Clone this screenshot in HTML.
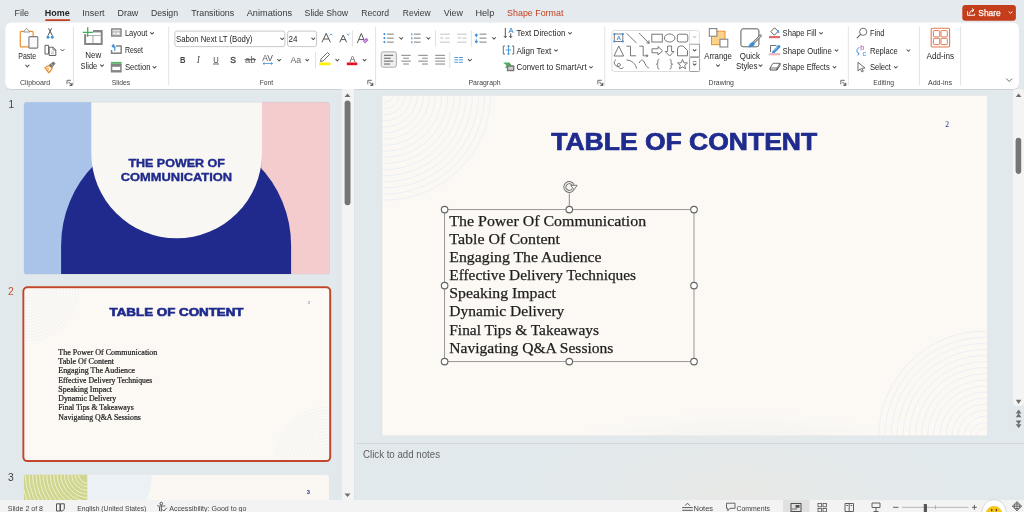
<!DOCTYPE html><html><head><meta charset="utf-8"><title>PowerPoint</title><style>html,body{margin:0;padding:0;width:1024px;height:512px;overflow:hidden;background:#e2e9ec;font-family:"Liberation Sans",sans-serif}</style></head><body><svg width="1024" height="512" viewBox="0 0 1024 512" style="display:block;will-change:transform">
<defs><filter id="sh" x="-5%" y="-20%" width="110%" height="150%"><feDropShadow dx="0" dy="0.6" stdDeviation="0.7" flood-color="#000" flood-opacity="0.16"/></filter><clipPath id="thumb3"><rect x="23.5" y="474.3" width="306" height="25.7"/></clipPath><radialGradient id="warm" cx="0.5" cy="0.5" r="0.5"><stop offset="0" stop-color="#e9e9e5" stop-opacity="0.85"/><stop offset="0.45" stop-color="#e8e9e7" stop-opacity="0.45"/><stop offset="1" stop-color="#e2e9ec" stop-opacity="0"/></radialGradient><clipPath id="slideclip"><rect x="0" y="0" width="605" height="340"/></clipPath></defs>
<rect x="0" y="0" width="1024" height="512" fill="#e2e9ec"/>
<rect x="0" y="0" width="1024" height="30" fill="#e4eaee"/>
<text x="14.60" y="16.20" font-family="Liberation Sans" font-size="9.2" font-weight="400" fill="#383838" textLength="14.4" lengthAdjust="spacingAndGlyphs" >File</text>
<text x="44.80" y="16.20" font-family="Liberation Sans" font-size="9.2" font-weight="700" fill="#242424" textLength="24.9" lengthAdjust="spacingAndGlyphs" >Home</text>
<text x="82.30" y="16.20" font-family="Liberation Sans" font-size="9.2" font-weight="400" fill="#383838" textLength="22.3" lengthAdjust="spacingAndGlyphs" >Insert</text>
<text x="117.50" y="16.20" font-family="Liberation Sans" font-size="9.2" font-weight="400" fill="#383838" textLength="20.8" lengthAdjust="spacingAndGlyphs" >Draw</text>
<text x="150.90" y="16.20" font-family="Liberation Sans" font-size="9.2" font-weight="400" fill="#383838" textLength="27.2" lengthAdjust="spacingAndGlyphs" >Design</text>
<text x="191.20" y="16.20" font-family="Liberation Sans" font-size="9.2" font-weight="400" fill="#383838" textLength="43.0" lengthAdjust="spacingAndGlyphs" >Transitions</text>
<text x="246.70" y="16.20" font-family="Liberation Sans" font-size="9.2" font-weight="400" fill="#383838" textLength="45.5" lengthAdjust="spacingAndGlyphs" >Animations</text>
<text x="304.60" y="16.20" font-family="Liberation Sans" font-size="9.2" font-weight="400" fill="#383838" textLength="43.4" lengthAdjust="spacingAndGlyphs" >Slide Show</text>
<text x="361.20" y="16.20" font-family="Liberation Sans" font-size="9.2" font-weight="400" fill="#383838" textLength="27.8" lengthAdjust="spacingAndGlyphs" >Record</text>
<text x="402.80" y="16.20" font-family="Liberation Sans" font-size="9.2" font-weight="400" fill="#383838" textLength="27.8" lengthAdjust="spacingAndGlyphs" >Review</text>
<text x="443.80" y="16.20" font-family="Liberation Sans" font-size="9.2" font-weight="400" fill="#383838" textLength="19.1" lengthAdjust="spacingAndGlyphs" >View</text>
<text x="475.50" y="16.20" font-family="Liberation Sans" font-size="9.2" font-weight="400" fill="#383838" textLength="18.7" lengthAdjust="spacingAndGlyphs" >Help</text>
<text x="507.10" y="16.20" font-family="Liberation Sans" font-size="9.2" font-weight="400" fill="#c43e1c" textLength="56.3" lengthAdjust="spacingAndGlyphs" >Shape Format</text>
<rect x="45" y="19.3" width="25.3" height="1.6" rx="0.8" fill="#c43e1c"/>
<rect x="962.3" y="4.9" width="53.6" height="15.8" rx="3" fill="#c43e1c"/>
<path d="M967.6 11.2 V15.3 H974.6 V13.6" fill="none" stroke="#fff" stroke-width="0.95" stroke-linejoin="round"/>
<path d="M969.6 13.8 C969.8 11.4 971.2 10.2 973.6 10.2 M972.2 8.6 L974 10.2 L972.2 11.8" fill="none" stroke="#fff" stroke-width="0.95" stroke-linecap="round" stroke-linejoin="round"/>
<text x="978.30" y="15.70" font-family="Liberation Sans" font-size="9.4" font-weight="400" fill="#ffffff" textLength="22.4" lengthAdjust="spacingAndGlyphs" stroke="#fff" stroke-width="0.25">Share</text>
<path d="M1009.00 11.80 L1010.60 13.40 L1012.20 11.80" fill="none" stroke="#ffffff" stroke-width="1" stroke-linecap="round" stroke-linejoin="round"/>
<rect x="5.3" y="22.5" width="1013.7" height="66.5" rx="6" fill="#ffffff" filter="url(#sh)"/>
<rect x="72.90" y="26.5" width="1" height="59.0" fill="#e3e3e3"/>
<rect x="168.20" y="26.5" width="1" height="59.0" fill="#e3e3e3"/>
<rect x="375.10" y="26.5" width="1" height="59.0" fill="#e3e3e3"/>
<rect x="604.30" y="26.5" width="1" height="59.0" fill="#e3e3e3"/>
<rect x="847.80" y="26.5" width="1" height="59.0" fill="#e3e3e3"/>
<rect x="918.90" y="26.5" width="1" height="59.0" fill="#e3e3e3"/>
<rect x="960.10" y="26.5" width="1" height="59.0" fill="#e3e3e3"/>
<text x="19.90" y="84.50" font-family="Liberation Sans" font-size="7.6" font-weight="400" fill="#424242" textLength="30.3" lengthAdjust="spacingAndGlyphs" >Clipboard</text>
<text x="111.80" y="84.50" font-family="Liberation Sans" font-size="7.6" font-weight="400" fill="#424242" textLength="18.4" lengthAdjust="spacingAndGlyphs" >Slides</text>
<text x="259.70" y="84.50" font-family="Liberation Sans" font-size="7.6" font-weight="400" fill="#424242" textLength="13.3" lengthAdjust="spacingAndGlyphs" >Font</text>
<text x="468.50" y="84.50" font-family="Liberation Sans" font-size="7.6" font-weight="400" fill="#424242" textLength="32.1" lengthAdjust="spacingAndGlyphs" >Paragraph</text>
<text x="708.60" y="84.50" font-family="Liberation Sans" font-size="7.6" font-weight="400" fill="#424242" textLength="25.3" lengthAdjust="spacingAndGlyphs" >Drawing</text>
<text x="873.20" y="84.50" font-family="Liberation Sans" font-size="7.6" font-weight="400" fill="#424242" textLength="20.8" lengthAdjust="spacingAndGlyphs" >Editing</text>
<text x="927.90" y="84.50" font-family="Liberation Sans" font-size="7.6" font-weight="400" fill="#424242" textLength="24.2" lengthAdjust="spacingAndGlyphs" >Add-ins</text>
<path d="M67.0 84.3 V80.3 H71.0" fill="none" stroke="#616161" stroke-width="0.9"/>
<path d="M68.5 81.8 L72.0 85.3 M72.0 82.8 V85.3 H69.5" fill="none" stroke="#424242" stroke-width="1"/>
<path d="M367.8 84.3 V80.3 H371.8" fill="none" stroke="#616161" stroke-width="0.9"/>
<path d="M369.3 81.8 L372.8 85.3 M372.8 82.8 V85.3 H370.3" fill="none" stroke="#424242" stroke-width="1"/>
<path d="M597.8 84.3 V80.3 H601.8" fill="none" stroke="#616161" stroke-width="0.9"/>
<path d="M599.3 81.8 L602.8 85.3 M602.8 82.8 V85.3 H600.3" fill="none" stroke="#424242" stroke-width="1"/>
<path d="M840.8 84.3 V80.3 H844.8" fill="none" stroke="#616161" stroke-width="0.9"/>
<path d="M842.3 81.8 L845.8 85.3 M845.8 82.8 V85.3 H843.3" fill="none" stroke="#424242" stroke-width="1"/>
<rect x="20.3" y="31.3" width="12.8" height="15.6" rx="1" fill="#fff" stroke="#e8912d" stroke-width="1.2"/>
<path d="M23.5 32 L26.7 28.3 L29.9 32 Z" fill="#fff" stroke="#8a8a8a" stroke-width="0.9" stroke-linejoin="round"/>
<rect x="28.9" y="36.6" width="8.9" height="11.5" rx="1" fill="#fafafa" stroke="#7a7a7a" stroke-width="1.1"/>
<text x="18.30" y="58.95" font-family="Liberation Sans" font-size="8.7" font-weight="400" fill="#262626" textLength="17.9" lengthAdjust="spacingAndGlyphs" >Paste</text>
<path d="M25.60 65.15 L27.30 66.85 L29.00 65.15" fill="none" stroke="#555555" stroke-width="1.05" stroke-linecap="round" stroke-linejoin="round"/>
<path d="M48.6 28.3 L52.3 35.6 M51.6 28.3 L47.9 35.6" stroke="#555" stroke-width="1" fill="none"/>
<circle cx="48" cy="37.2" r="1.45" fill="#3b8fd9"/><circle cx="52.3" cy="37.2" r="1.45" fill="#3b8fd9"/>
<path d="M45 45.3 H48.6 M45 45.3 V54 H48.6" fill="none" stroke="#616161" stroke-width="1"/>
<path d="M48.6 45.3 V54" stroke="#616161" stroke-width="1"/>
<path d="M49.2 47.2 H53 L55.8 50 V55.5 H49.2 Z" fill="#fff" stroke="#616161" stroke-width="1" stroke-linejoin="round"/>
<path d="M53 47.2 V50 H55.8" fill="none" stroke="#616161" stroke-width="0.8"/>
<path d="M51 52 H54 M51 53.7 H54" stroke="#a0a0a0" stroke-width="0.7"/>
<path d="M60.80 49.35 L62.50 51.05 L64.20 49.35" fill="none" stroke="#555" stroke-width="1" stroke-linecap="round" stroke-linejoin="round"/>
<path d="M45 67.5 L49.3 65.3 L52.2 68.5 L48.8 72.8 Z" fill="#fff" stroke="#e8912d" stroke-width="1.3" stroke-linejoin="round"/>
<path d="M46.5 68 L49.5 67.5 L48.5 70.8" fill="#f5b86a"/>
<path d="M48.8 65 L53.5 61.5 L55.5 63.5 L52 68 Z" fill="#777"/>
<path d="M51 63.8 L53.8 66.5" stroke="#fff" stroke-width="0.5"/>
<rect x="84.1" y="30.1" width="18.6" height="14.9" rx="0.6" fill="#858585"/>
<rect x="86.1" y="32.4" width="14.6" height="10.6" fill="#fff"/>
<rect x="86.1" y="35.1" width="14.6" height="0.9" fill="#a8a8a8"/>
<rect x="92.4" y="35.5" width="1.1" height="7.5" fill="#a8a8a8"/>
<rect x="81.5" y="27" width="11.5" height="7.2" fill="#fff"/>
<path d="M82.7 32.3 H92.9 M87.7 27.2 V36.7" stroke="#3fae5a" stroke-width="1.3"/>
<text x="85.30" y="58.35" font-family="Liberation Sans" font-size="8.7" font-weight="400" fill="#262626" textLength="15.9" lengthAdjust="spacingAndGlyphs" >New</text>
<text x="80.60" y="69.15" font-family="Liberation Sans" font-size="8.7" font-weight="400" fill="#262626" textLength="16.6" lengthAdjust="spacingAndGlyphs" >Slide</text>
<path d="M100.50 64.85 L102.00 66.35 L103.50 64.85" fill="none" stroke="#555555" stroke-width="1.05" stroke-linecap="round" stroke-linejoin="round"/>
<rect x="111" y="28.2" width="10.7" height="8.5" rx="0.5" fill="#858585"/>
<rect x="112.5" y="29.7" width="7.7" height="5.5" fill="#f4f4f4"/>
<rect x="112.5" y="30.8" width="7.7" height="0.8" fill="#a8a8a8"/>
<rect x="113" y="32.2" width="2.8" height="2.5" fill="#fff" stroke="#a8a8a8" stroke-width="0.5"/>
<rect x="116.8" y="32.2" width="2.8" height="2.5" fill="#fff" stroke="#a8a8a8" stroke-width="0.5"/>
<text x="124.90" y="36.45" font-family="Liberation Sans" font-size="8.7" font-weight="400" fill="#262626" textLength="22.5" lengthAdjust="spacingAndGlyphs" >Layout</text>
<path d="M150.50 32.55 L152.00 34.05 L153.50 32.55" fill="none" stroke="#555555" stroke-width="1.05" stroke-linecap="round" stroke-linejoin="round"/>
<rect x="110.8" y="45.2" width="11.1" height="8.7" rx="0.5" fill="#858585"/>
<rect x="112.3" y="46.7" width="8.1" height="5.7" fill="#fff"/>
<rect x="110.3" y="44" width="5.5" height="6" fill="#fff"/>
<path d="M114.8 50.3 V47.3 C114.8 46.2 113.8 45.6 112.6 45.9 M113.6 44.7 L112.2 46 L113.6 47.2" fill="none" stroke="#3b8fd9" stroke-width="1.2" stroke-linecap="round" stroke-linejoin="round"/>
<text x="124.90" y="53.25" font-family="Liberation Sans" font-size="8.7" font-weight="400" fill="#262626" textLength="18.1" lengthAdjust="spacingAndGlyphs" >Reset</text>
<rect x="110.8" y="63.8" width="10.9" height="8.8" rx="0.5" fill="#858585"/>
<rect x="112.3" y="66.8" width="7.9" height="3.3" fill="#fff"/>
<rect x="110.8" y="61.9" width="10.9" height="1.9" fill="#5cb36c"/>
<text x="124.90" y="70.45" font-family="Liberation Sans" font-size="8.7" font-weight="400" fill="#262626" textLength="25.5" lengthAdjust="spacingAndGlyphs" >Section</text>
<path d="M153.00 66.55 L154.50 68.05 L156.00 66.55" fill="none" stroke="#555555" stroke-width="1.05" stroke-linecap="round" stroke-linejoin="round"/>
<rect x="174.9" y="31.1" width="110" height="15.5" rx="2.2" fill="#fff" stroke="#c2c2c2" stroke-width="0.9"/>
<text x="176.00" y="42.15" font-family="Liberation Sans" font-size="8.7" font-weight="400" fill="#262626" textLength="76.4" lengthAdjust="spacingAndGlyphs" >Sabon Next LT (Body)</text>
<path d="M280.70 38.05 L282.20 39.55 L283.70 38.05" fill="none" stroke="#555555" stroke-width="1.05" stroke-linecap="round" stroke-linejoin="round"/>
<rect x="287.6" y="31.1" width="29" height="15.5" rx="2.2" fill="#fff" stroke="#c2c2c2" stroke-width="0.9"/>
<text x="288.60" y="42.15" font-family="Liberation Sans" font-size="8.7" font-weight="400" fill="#262626" textLength="9.0" lengthAdjust="spacingAndGlyphs" >24</text>
<path d="M311.80 38.05 L313.30 39.55 L314.80 38.05" fill="none" stroke="#555555" stroke-width="1.05" stroke-linecap="round" stroke-linejoin="round"/>
<path d="M322 42.3 L326.2 33.3 L330.4 42.3 M323.6 39 H328.8" fill="none" stroke="#555" stroke-width="1"/>
<path d="M329.6 35.3 L331 33.9 L332.4 35.3" fill="none" stroke="#3b8fd9" stroke-width="0.9"/>
<path d="M339.8 42.3 L343.2 35 L346.6 42.3 M341.1 39.6 H345.3" fill="none" stroke="#555" stroke-width="1"/>
<path d="M346.8 33.8 L348.2 35.2 L349.6 33.8" fill="none" stroke="#3b8fd9" stroke-width="0.9"/>
<rect x="351.90" y="30.5" width="1" height="16.0" fill="#e0e0e0"/>
<path d="M357.3 43 L361.3 33.5 L365.3 43 M358.8 39.6 H363.8" fill="none" stroke="#555" stroke-width="1"/>
<path d="M362.8 41.3 L366.3 37.8 L368.6 40.1 L365.1 43.6 Z" fill="#b869d4"/>
<path d="M364 42.4 L366.3 40" stroke="#fff" stroke-width="0.6"/>
<text x="180.00" y="62.50" font-family="Liberation Sans" font-size="8.8" font-weight="700" fill="#424242" textLength="5.5" lengthAdjust="spacingAndGlyphs" >B</text>
<text x="196.80" y="62.60" font-family="Liberation Serif" font-size="9.5" font-weight="400" fill="#555" font-style="italic">I</text>
<text x="213.30" y="62.50" font-family="Liberation Sans" font-size="8.8" font-weight="400" fill="#424242" textLength="5.5" lengthAdjust="spacingAndGlyphs" >U</text>
<rect x="213" y="63.6" width="6" height="0.8" fill="#424242"/>
<text x="230.20" y="62.80" font-family="Liberation Sans" font-size="9.4" font-weight="400" fill="#424242" textLength="5.8" lengthAdjust="spacingAndGlyphs" stroke="#424242" stroke-width="0.35">S</text>
<text x="245.00" y="62.50" font-family="Liberation Sans" font-size="8.8" font-weight="400" fill="#616161" textLength="10.5" lengthAdjust="spacingAndGlyphs" >ab</text>
<rect x="244.5" y="59.3" width="11.5" height="0.8" fill="#424242"/>
<text x="262.30" y="61.00" font-family="Liberation Sans" font-size="8.4" font-weight="400" fill="#505050" textLength="10.7" lengthAdjust="spacingAndGlyphs" >AV</text>
<path d="M263 63.5 H272.5 M264.5 62.3 L263 63.5 L264.5 64.7 M271 62.3 L272.5 63.5 L271 64.7" fill="none" stroke="#3b8fd9" stroke-width="0.8"/>
<path d="M277.60 59.45 L279.10 60.95 L280.60 59.45" fill="none" stroke="#555555" stroke-width="1.05" stroke-linecap="round" stroke-linejoin="round"/>
<text x="290.40" y="62.80" font-family="Liberation Sans" font-size="9.4" font-weight="400" fill="#666" textLength="10.8" lengthAdjust="spacingAndGlyphs" >Aa</text>
<path d="M305.70 59.45 L307.20 60.95 L308.70 59.45" fill="none" stroke="#555555" stroke-width="1.05" stroke-linecap="round" stroke-linejoin="round"/>
<rect x="315.10" y="52" width="1" height="16" fill="#e0e0e0"/>
<path d="M321 59 L327.5 52.5 L329.5 54.5 L323 61 L320.5 61.5 Z" fill="#fff" stroke="#616161" stroke-width="0.9" stroke-linejoin="round"/>
<rect x="319.2" y="62.5" width="11.2" height="2.7" fill="#fff100"/>
<path d="M335.80 59.45 L337.30 60.95 L338.80 59.45" fill="none" stroke="#555555" stroke-width="1.05" stroke-linecap="round" stroke-linejoin="round"/>
<text x="349.50" y="61.50" font-family="Liberation Sans" font-size="8.8" font-weight="400" fill="#505050" textLength="6.0" lengthAdjust="spacingAndGlyphs" >A</text>
<rect x="346.8" y="62.5" width="10.5" height="2.7" fill="#e81123"/>
<path d="M363.00 59.45 L364.50 60.95 L366.00 59.45" fill="none" stroke="#555555" stroke-width="1.05" stroke-linecap="round" stroke-linejoin="round"/>
<circle cx="384.4" cy="34.1" r="1.05" fill="#3b8fd9"/>
<circle cx="384.4" cy="38.1" r="1.05" fill="#3b8fd9"/>
<circle cx="384.4" cy="42.1" r="1.05" fill="#3b8fd9"/>
<rect x="387.00" y="33.60" width="6.80" height="1.1" fill="#8a8a8a"/>
<rect x="387.00" y="37.60" width="6.80" height="1.1" fill="#8a8a8a"/>
<rect x="387.00" y="41.60" width="6.80" height="1.1" fill="#8a8a8a"/>
<path d="M399.60 37.50 L401.20 39.10 L402.80 37.50" fill="none" stroke="#555555" stroke-width="1.05" stroke-linecap="round" stroke-linejoin="round"/>
<rect x="411.3" y="33.1" width="1" height="2.3" fill="#3b8fd9"/>
<rect x="411.3" y="37.1" width="1" height="2.3" fill="#3b8fd9"/>
<rect x="411.3" y="41.1" width="1" height="2.3" fill="#3b8fd9"/>
<rect x="413.80" y="33.60" width="6.80" height="1.1" fill="#8a8a8a"/>
<rect x="413.80" y="37.60" width="6.80" height="1.1" fill="#8a8a8a"/>
<rect x="413.80" y="41.60" width="6.80" height="1.1" fill="#8a8a8a"/>
<path d="M426.80 37.50 L428.40 39.10 L430.00 37.50" fill="none" stroke="#555555" stroke-width="1.05" stroke-linecap="round" stroke-linejoin="round"/>
<rect x="435.00" y="30.5" width="1" height="16.0" fill="#e0e0e0"/>
<rect x="440.20" y="33.60" width="9.50" height="1.1" fill="#c8c8c8"/>
<rect x="445.20" y="37.60" width="4.50" height="1.1" fill="#c8c8c8"/>
<rect x="440.20" y="41.60" width="9.50" height="1.1" fill="#c8c8c8"/>
<path d="M443.5 37.9 H440.8 M442 36.8 L440.8 37.9 L442 39" fill="none" stroke="#c8c8c8" stroke-width="0.9"/>
<rect x="457.20" y="33.60" width="9.50" height="1.1" fill="#c8c8c8"/>
<rect x="462.20" y="37.60" width="4.50" height="1.1" fill="#c8c8c8"/>
<rect x="457.20" y="41.60" width="9.50" height="1.1" fill="#c8c8c8"/>
<path d="M457.6 37.9 H460.4 M459.2 36.8 L460.4 37.9 L459.2 39" fill="none" stroke="#c8c8c8" stroke-width="0.9"/>
<rect x="470.80" y="30.5" width="1" height="16.0" fill="#e0e0e0"/>
<rect x="479.50" y="33.60" width="7.00" height="1.1" fill="#8a8a8a"/>
<rect x="479.50" y="37.60" width="7.00" height="1.1" fill="#8a8a8a"/>
<rect x="479.50" y="41.60" width="7.00" height="1.1" fill="#8a8a8a"/>
<path d="M476.3 34.5 V37.2 M474.9 35.6 L476.3 34 L477.7 35.6 M476.3 39.3 V42.2 M474.9 41 L476.3 42.6 L477.7 41" fill="none" stroke="#3b8fd9" stroke-width="1.1"/>
<path d="M492.40 37.50 L494.00 39.10 L495.60 37.50" fill="none" stroke="#555555" stroke-width="1.05" stroke-linecap="round" stroke-linejoin="round"/>
<rect x="381.2" y="51.8" width="15.2" height="15.4" rx="2" fill="#efefef" stroke="#9a9a9a" stroke-width="0.8"/>
<rect x="384.00" y="54.80" width="9.30" height="1.05" fill="#6a6a6a"/>
<rect x="384.00" y="57.70" width="6.80" height="1.05" fill="#6a6a6a"/>
<rect x="384.00" y="60.60" width="9.30" height="1.05" fill="#6a6a6a"/>
<rect x="384.00" y="63.50" width="6.20" height="1.05" fill="#6a6a6a"/>
<rect x="401.30" y="54.80" width="9.50" height="1.05" fill="#8a8a8a"/>
<rect x="403.20" y="57.70" width="5.70" height="1.05" fill="#8a8a8a"/>
<rect x="401.30" y="60.60" width="9.50" height="1.05" fill="#8a8a8a"/>
<rect x="403.20" y="63.50" width="5.70" height="1.05" fill="#8a8a8a"/>
<rect x="418.30" y="54.80" width="9.50" height="1.05" fill="#8a8a8a"/>
<rect x="422.10" y="57.70" width="5.70" height="1.05" fill="#8a8a8a"/>
<rect x="418.30" y="60.60" width="9.50" height="1.05" fill="#8a8a8a"/>
<rect x="422.10" y="63.50" width="5.70" height="1.05" fill="#8a8a8a"/>
<rect x="435.20" y="54.80" width="9.80" height="1.05" fill="#8a8a8a"/>
<rect x="435.20" y="57.70" width="9.80" height="1.05" fill="#8a8a8a"/>
<rect x="435.20" y="60.60" width="9.80" height="1.05" fill="#8a8a8a"/>
<rect x="435.20" y="63.50" width="9.80" height="1.05" fill="#8a8a8a"/>
<rect x="449.20" y="52" width="1" height="16" fill="#e0e0e0"/>
<rect x="454.40" y="57.00" width="3.80" height="0.9" fill="#3b8fd9"/>
<rect x="454.40" y="59.40" width="3.80" height="0.9" fill="#3b8fd9"/>
<rect x="454.40" y="61.80" width="3.80" height="0.9" fill="#3b8fd9"/>
<rect x="459.10" y="57.00" width="3.80" height="0.9" fill="#3b8fd9"/>
<rect x="459.10" y="59.40" width="3.80" height="0.9" fill="#3b8fd9"/>
<rect x="459.10" y="61.80" width="3.80" height="0.9" fill="#3b8fd9"/>
<path d="M468.20 59.40 L469.80 61.00 L471.40 59.40" fill="none" stroke="#555555" stroke-width="1.05" stroke-linecap="round" stroke-linejoin="round"/>
<path d="M505.3 28 V37.6 M503.9 36.1 L505.3 37.7 L506.7 36.1 M510.7 33.3 V37.6 M509.3 36.1 L510.7 37.7 L512.1 36.1" fill="none" stroke="#555" stroke-width="1"/>
<path d="M508.8 33 L511 28 L513.2 33 M509.6 31.3 H512.4" fill="none" stroke="#3b8fd9" stroke-width="0.9"/>
<text x="516.50" y="36.45" font-family="Liberation Sans" font-size="8.7" font-weight="400" fill="#262626" textLength="48.9" lengthAdjust="spacingAndGlyphs" >Text Direction</text>
<path d="M568.60 32.60 L570.00 34.00 L571.40 32.60" fill="none" stroke="#555555" stroke-width="1.05" stroke-linecap="round" stroke-linejoin="round"/>
<path d="M505 46 H503.3 V54 H505 M512 46 H513.7 V54 H512" fill="none" stroke="#616161" stroke-width="0.9"/>
<path d="M508.5 45.3 V54.7 M507.2 46.6 L508.5 45.2 L509.8 46.6 M507.2 53.4 L508.5 54.8 L509.8 53.4 M505.8 50 H511.2" fill="none" stroke="#3b8fd9" stroke-width="0.9"/>
<text x="516.50" y="53.65" font-family="Liberation Sans" font-size="8.7" font-weight="400" fill="#262626" textLength="34.8" lengthAdjust="spacingAndGlyphs" >Align Text</text>
<path d="M554.60 49.80 L556.00 51.20 L557.40 49.80" fill="none" stroke="#555555" stroke-width="1.05" stroke-linecap="round" stroke-linejoin="round"/>
<path d="M503 62.5 H509.5 L511.5 65.2 L509.5 67.8 H505 L506.5 65.2 Z" fill="#4caf5f"/>
<rect x="506.8" y="65.3" width="7.6" height="6" rx="0.9" fill="#7a7a7a"/>
<rect x="508.2" y="66.8" width="4.8" height="3" fill="#cfcfcf"/>
<text x="516.50" y="70.45" font-family="Liberation Sans" font-size="8.7" font-weight="400" fill="#262626" textLength="70.1" lengthAdjust="spacingAndGlyphs" >Convert to SmartArt</text>
<path d="M589.60 66.60 L591.00 68.00 L592.40 66.60" fill="none" stroke="#555555" stroke-width="1.05" stroke-linecap="round" stroke-linejoin="round"/>
<rect x="611.8" y="30.5" width="87.6" height="41" rx="2.8" fill="#fff" stroke="#d6d6d6" stroke-width="0.8"/>
<rect x="689.6" y="44.2" width="10" height="12.6" fill="#fff" stroke="#8a8a8a" stroke-width="0.8"/>
<path d="M689.6 30.5 V71.5" stroke="#d6d6d6" stroke-width="0.8"/>
<rect x="689.6" y="57.5" width="10" height="14" rx="1" fill="#fff" stroke="#8a8a8a" stroke-width="0.8"/>
<path d="M693.20 36.30 L694.60 37.70 L696.00 36.30" fill="none" stroke="#c8c8c8" stroke-width="1.05" stroke-linecap="round" stroke-linejoin="round"/>
<path d="M693.20 49.60 L694.60 51.00 L696.00 49.60" fill="none" stroke="#555555" stroke-width="1.05" stroke-linecap="round" stroke-linejoin="round"/>
<path d="M692.8 61.5 H696.4" stroke="#616161" stroke-width="0.7"/>
<path d="M693.20 63.80 L694.60 65.20 L696.00 63.80" fill="none" stroke="#555555" stroke-width="1.05" stroke-linecap="round" stroke-linejoin="round"/>
<rect x="614.3" y="34" width="8.5" height="7.5" fill="none" stroke="#6a6a6a" stroke-width="0.9"/>
<rect x="613.4" y="33.1" width="1.8" height="1.8" fill="#3b8fd9"/>
<rect x="621.9" y="33.1" width="1.8" height="1.8" fill="#3b8fd9"/>
<rect x="613.4" y="40.6" width="1.8" height="1.8" fill="#3b8fd9"/>
<rect x="621.9" y="40.6" width="1.8" height="1.8" fill="#3b8fd9"/>
<text x="616.40" y="40.20" font-family="Liberation Sans" font-size="6" font-weight="700" fill="#3b8fd9" textLength="4.5" lengthAdjust="spacingAndGlyphs" >A</text>
<path d="M626.5 33.2 L636.5 43" stroke="#6a6a6a" stroke-width="0.9"/>
<path d="M639 33.2 L649 43 M646.3 42.8 L649.3 43.3 L648.8 40.3" fill="none" stroke="#6a6a6a" stroke-width="0.9"/>
<rect x="651.8" y="34.2" width="10.5" height="7.8" fill="none" stroke="#6a6a6a" stroke-width="0.9"/>
<ellipse cx="669.6" cy="38" rx="5.3" ry="4" fill="none" stroke="#6a6a6a" stroke-width="0.9"/>
<rect x="677.3" y="34.2" width="10.5" height="7.8" rx="2" fill="none" stroke="#6a6a6a" stroke-width="0.9"/>
<path d="M614 56 L618.8 46 L623.6 56 Z" fill="none" stroke="#6a6a6a" stroke-width="0.9" stroke-linejoin="round"/>
<path d="M626.5 46.2 H630.5 V55.8 H636" fill="none" stroke="#6a6a6a" stroke-width="0.9"/>
<path d="M639.2 46.2 H643.2 V55.8 H648 M646.3 54.5 L648.2 55.8 L646.3 57" fill="none" stroke="#6a6a6a" stroke-width="0.9"/>
<path d="M652 48.8 H658 V46.5 L662.5 50.8 L658 55 V52.8 H652 Z" fill="none" stroke="#6a6a6a" stroke-width="0.9" stroke-linejoin="round"/>
<path d="M667.6 46 H671.6 V51.5 H674 L669.6 56 L665.2 51.5 H667.6 Z" fill="none" stroke="#6a6a6a" stroke-width="0.9" stroke-linejoin="round"/>
<path d="M677.5 49 Q677.5 46 680.5 46 H683 L687.5 50.5 V55.8 H677.5 Z" fill="none" stroke="#6a6a6a" stroke-width="0.9" stroke-linejoin="round"/>
<path d="M616 59.5 C612.5 62 615 66.5 618 66.5 C620.5 66.5 621.5 64 619 63.5 C617 63.2 616.5 66 619.5 68 C621 69 623 68.5 623.3 67.5" fill="none" stroke="#6a6a6a" stroke-width="0.9"/>
<path d="M626.5 60 C631.5 60 636 64 636.5 68.5" fill="none" stroke="#6a6a6a" stroke-width="0.9"/>
<path d="M639.2 63 C641 59 643 59 645 63.5 C647 68 648.5 68 649 67.5" fill="none" stroke="#6a6a6a" stroke-width="0.9"/>
<path d="M659.2 59.5 C657.2 59.5 657.8 61.5 657.8 63 C657.8 64 657 64.2 656.3 64.2 C657 64.2 657.8 64.5 657.8 65.5 C657.8 67 657.2 69 659.2 69" fill="none" stroke="#6a6a6a" stroke-width="0.9"/>
<path d="M669.7 59.5 C671.7 59.5 671.1 61.5 671.1 63 C671.1 64 671.9 64.2 672.6 64.2 C671.9 64.2 671.1 64.5 671.1 65.5 C671.1 67 671.7 69 669.7 69" fill="none" stroke="#6a6a6a" stroke-width="0.9"/>
<polygon points="682.50,59.40 683.85,62.74 687.45,62.99 684.69,65.31 685.56,68.81 682.50,66.90 679.44,68.81 680.31,65.31 677.55,62.99 681.15,62.74" fill="none" stroke="#6a6a6a" stroke-width="0.9" stroke-linejoin="round"/>
<rect x="711.5" y="31.2" width="13.5" height="13.5" fill="#fcd28a" stroke="#e8912d" stroke-width="1"/>
<rect x="709.3" y="28.6" width="7.6" height="7.6" fill="#fff" stroke="#7a7a7a" stroke-width="1"/>
<rect x="720" y="39.2" width="7.8" height="7.8" fill="#fff" stroke="#7a7a7a" stroke-width="1"/>
<text x="704.20" y="58.55" font-family="Liberation Sans" font-size="8.7" font-weight="400" fill="#262626" textLength="27.7" lengthAdjust="spacingAndGlyphs" >Arrange</text>
<path d="M716.50 64.85 L718.00 66.35 L719.50 64.85" fill="none" stroke="#555555" stroke-width="1.05" stroke-linecap="round" stroke-linejoin="round"/>
<rect x="741" y="28.9" width="17.8" height="17.8" rx="2" fill="#fff" stroke="#7a7a7a" stroke-width="1"/>
<rect x="741" y="28.9" width="17.8" height="17.8" rx="2" fill="#fff" stroke="#7a7a7a" stroke-width="1"/>
<path d="M760.6 35.6 L753.2 43.2" stroke="#707070" stroke-width="2.6" stroke-linecap="round"/>
<path d="M760.6 35.6 L753.2 43.2" stroke="#fff" stroke-width="0.9" stroke-linecap="round"/>
<path d="M753.8 42.4 C751.8 41.8 749.2 43 748.4 47.2 C751.2 47.6 754.2 46.8 755 43.6 Z" fill="#3b8fd9"/>
<text x="739.80" y="58.55" font-family="Liberation Sans" font-size="8.7" font-weight="400" fill="#262626" textLength="20.2" lengthAdjust="spacingAndGlyphs" >Quick</text>
<text x="735.90" y="69.15" font-family="Liberation Sans" font-size="8.7" font-weight="400" fill="#262626" textLength="21.6" lengthAdjust="spacingAndGlyphs" >Styles</text>
<path d="M759.00 64.85 L760.50 66.35 L762.00 64.85" fill="none" stroke="#555555" stroke-width="1.05" stroke-linecap="round" stroke-linejoin="round"/>
<path d="M770.8 31.6 L774.6 27.8 L778.2 31.4 L774.4 35.2 Z" fill="#fff" stroke="#555" stroke-width="0.95" stroke-linejoin="round"/>
<path d="M777.2 30.2 C778.3 29.6 779.5 30.4 779.2 33.3 C778.4 33 777.6 32.4 777.2 30.2 Z" fill="#3b8fd9"/>
<rect x="769" y="36" width="11" height="2.2" fill="#e06a6a"/>
<text x="782.60" y="36.45" font-family="Liberation Sans" font-size="8.7" font-weight="400" fill="#262626" textLength="33.8" lengthAdjust="spacingAndGlyphs" >Shape Fill</text>
<path d="M819.60 32.60 L821.00 34.00 L822.40 32.60" fill="none" stroke="#555555" stroke-width="1.05" stroke-linecap="round" stroke-linejoin="round"/>
<path d="M770.5 52 V45.5 H776.5" fill="none" stroke="#616161" stroke-width="0.9"/>
<path d="M772.3 51.6 L777.6 45.6 C778.3 44.9 779.4 44.9 780 45.6 C780.6 46.3 780.5 47.2 779.8 47.8 L774.2 53.2 L771.8 53.6 Z" fill="#3b8fd9"/>
<path d="M774 50.6 L777.8 46.8" stroke="#fff" stroke-width="0.6"/>
<rect x="769" y="53.1" width="11" height="2.2" fill="#f4b6b6"/>
<text x="782.60" y="53.65" font-family="Liberation Sans" font-size="8.7" font-weight="400" fill="#262626" textLength="49.1" lengthAdjust="spacingAndGlyphs" >Shape Outline</text>
<path d="M835.10 49.80 L836.50 51.20 L837.90 49.80" fill="none" stroke="#555555" stroke-width="1.05" stroke-linecap="round" stroke-linejoin="round"/>
<path d="M770 68 L773 63.3 H780 L777 68 Z" fill="#fff" stroke="#616161" stroke-width="0.9" stroke-linejoin="round"/>
<path d="M770 68 V70 H777 L780 65.3 V63.3 M777 68 V70" fill="none" stroke="#424242" stroke-width="0.9" stroke-linejoin="round"/>
<text x="782.60" y="70.45" font-family="Liberation Sans" font-size="8.7" font-weight="400" fill="#262626" textLength="47.1" lengthAdjust="spacingAndGlyphs" >Shape Effects</text>
<path d="M833.10 66.60 L834.50 68.00 L835.90 66.60" fill="none" stroke="#555555" stroke-width="1.05" stroke-linecap="round" stroke-linejoin="round"/>
<circle cx="863.2" cy="31.8" r="3.6" fill="none" stroke="#616161" stroke-width="0.9"/>
<path d="M860.6 34.4 L857.2 37.8" stroke="#616161" stroke-width="1.1" stroke-linecap="round"/>
<text x="869.90" y="36.45" font-family="Liberation Sans" font-size="8.7" font-weight="400" fill="#262626" textLength="14.6" lengthAdjust="spacingAndGlyphs" >Find</text>
<text x="860.30" y="50.30" font-family="Liberation Sans" font-size="7.2" font-weight="400" fill="#b146c2" >b</text>
<text x="862.60" y="55.60" font-family="Liberation Sans" font-size="7.2" font-weight="400" fill="#3b8fd9" >c</text>
<path d="M859.5 47.6 C856.5 48.2 855.8 52.3 858.8 53.6 M857.6 52.3 L859.2 53.8 L857.4 55.2" fill="none" stroke="#3b8fd9" stroke-width="1"/>
<text x="869.90" y="53.65" font-family="Liberation Sans" font-size="8.7" font-weight="400" fill="#262626" textLength="27.9" lengthAdjust="spacingAndGlyphs" >Replace</text>
<path d="M906.90 49.75 L908.40 51.25 L909.90 49.75" fill="none" stroke="#555555" stroke-width="1.05" stroke-linecap="round" stroke-linejoin="round"/>
<path d="M858 62.3 V71 L860.3 68.8 L862 72 L863.3 71.3 L861.8 68.3 L865 68 Z" fill="#fff" stroke="#616161" stroke-width="0.9" stroke-linejoin="round"/>
<text x="869.90" y="70.45" font-family="Liberation Sans" font-size="8.7" font-weight="400" fill="#262626" textLength="21.1" lengthAdjust="spacingAndGlyphs" >Select</text>
<path d="M894.40 66.60 L895.80 68.00 L897.20 66.60" fill="none" stroke="#555555" stroke-width="1.05" stroke-linecap="round" stroke-linejoin="round"/>
<rect x="931.2" y="28.3" width="18.4" height="18.7" rx="1.2" fill="#fff" stroke="#e6774f" stroke-width="1.1"/>
<rect x="933.4" y="30.6" width="6.3" height="6.3" rx="0.8" fill="#fff" stroke="#e6774f" stroke-width="1"/>
<rect x="941.0" y="30.6" width="6.3" height="6.3" rx="0.8" fill="#fff" stroke="#e6774f" stroke-width="1"/>
<rect x="933.4" y="38.3" width="6.3" height="6.3" rx="0.8" fill="#fff" stroke="#e6774f" stroke-width="1"/>
<rect x="941.0" y="38.3" width="6.3" height="6.3" rx="0.8" fill="#fff" stroke="#e6774f" stroke-width="1"/>
<text x="926.60" y="58.55" font-family="Liberation Sans" font-size="8.7" font-weight="400" fill="#262626" textLength="27.6" lengthAdjust="spacingAndGlyphs" >Add-ins</text>
<path d="M1006.60 78.90 L1009.20 81.50 L1011.80 78.90" fill="none" stroke="#555555" stroke-width="0.9" stroke-linecap="round" stroke-linejoin="round"/>
<rect x="342" y="89" width="12" height="411" fill="#f4f4f4"/>
<rect x="354" y="89" width="1" height="411" fill="#dde3e8"/>
<path d="M344.5 97 L347.5 93.5 L350.5 97 Z" fill="#6e6e6e"/>
<rect x="344.6" y="100.6" width="5.9" height="104.6" rx="2.9" fill="#757575"/>
<path d="M344.5 493.5 L347.5 497 L350.5 493.5 Z" fill="#6e6e6e"/>
<text x="8.60" y="108.00" font-family="Liberation Sans" font-size="10" font-weight="400" fill="#424242" >1</text>
<text x="7.90" y="295.00" font-family="Liberation Sans" font-size="10.3" font-weight="400" fill="#c9502f" >2</text>
<text x="7.90" y="481.00" font-family="Liberation Sans" font-size="10.3" font-weight="400" fill="#424242" >3</text>
<g>
<rect x="23.6" y="101.8" width="306.2" height="172.8" rx="3.2" fill="#d3d8dc"/>
<clipPath id="s1c"><rect x="24" y="102.2" width="305.3" height="172" rx="3"/></clipPath>
<g clip-path="url(#s1c)">
<rect x="24" y="102" width="305.5" height="172" fill="#a9c4e8"/>
<rect x="262" y="102" width="67.5" height="172" fill="#f4cccd"/>
<path d="M61.1 274 V245.5 A115 115 0 0 1 291.1 245.5 V274 Z" fill="#1f2a8c"/>
<path d="M91.3 102 H262 V153 A85.35 85.35 0 0 1 91.3 153 Z" fill="#f9f7f3"/>
</g>
<text x="128.40" y="167.10" font-family="Liberation Sans" font-size="10.6" font-weight="700" fill="#1f2a8c" textLength="96.5" lengthAdjust="spacingAndGlyphs" stroke="#1f2a8c" stroke-width="0.35">THE POWER OF</text>
<text x="120.80" y="181.10" font-family="Liberation Sans" font-size="10.6" font-weight="700" fill="#1f2a8c" textLength="111.3" lengthAdjust="spacingAndGlyphs" stroke="#1f2a8c" stroke-width="0.35">COMMUNICATION</text>
</g>
<rect x="23.4" y="287.3" width="306.8" height="173.8" rx="4" fill="#fcf9f5" stroke="#c2472a" stroke-width="2"/>
<clipPath id="s2c"><rect x="24.5" y="288.5" width="304.6" height="171.5" rx="3"/></clipPath>
<g clip-path="url(#s2c)"><g transform="translate(24.5 288.5) scale(0.5035)"><rect x="0" y="0" width="605" height="340" fill="#fcf9f5"/><g clip-path="url(#slideclip)" fill="none" stroke="#e9eef4" stroke-width="0.9"><circle cx="2.5" cy="-1.5" r="106.0"/><circle cx="602.5" cy="341.5" r="106.0"/><circle cx="2.5" cy="-1.5" r="99.9"/><circle cx="602.5" cy="341.5" r="99.9"/><circle cx="2.5" cy="-1.5" r="93.8"/><circle cx="602.5" cy="341.5" r="93.8"/><circle cx="2.5" cy="-1.5" r="87.7"/><circle cx="602.5" cy="341.5" r="87.7"/><circle cx="2.5" cy="-1.5" r="81.6"/><circle cx="602.5" cy="341.5" r="81.6"/><circle cx="2.5" cy="-1.5" r="75.5"/><circle cx="602.5" cy="341.5" r="75.5"/><circle cx="2.5" cy="-1.5" r="69.4"/><circle cx="602.5" cy="341.5" r="69.4"/><circle cx="2.5" cy="-1.5" r="63.3"/><circle cx="602.5" cy="341.5" r="63.3"/><circle cx="2.5" cy="-1.5" r="57.2"/><circle cx="602.5" cy="341.5" r="57.2"/><circle cx="2.5" cy="-1.5" r="51.1"/><circle cx="602.5" cy="341.5" r="51.1"/><circle cx="2.5" cy="-1.5" r="45.0"/><circle cx="602.5" cy="341.5" r="45.0"/><circle cx="2.5" cy="-1.5" r="38.9"/><circle cx="602.5" cy="341.5" r="38.9"/><circle cx="2.5" cy="-1.5" r="32.8"/><circle cx="602.5" cy="341.5" r="32.8"/><circle cx="2.5" cy="-1.5" r="26.7"/><circle cx="602.5" cy="341.5" r="26.7"/><circle cx="2.5" cy="-1.5" r="20.6"/><circle cx="602.5" cy="341.5" r="20.6"/><circle cx="2.5" cy="-1.5" r="14.5"/><circle cx="602.5" cy="341.5" r="14.5"/><circle cx="2.5" cy="-1.5" r="8.4"/><circle cx="602.5" cy="341.5" r="8.4"/></g><text x="169" y="54.9" font-family="Liberation Sans" font-size="23.5" font-weight="700" fill="#1f2b8d" stroke="#1f2b8d" stroke-width="1.3" textLength="266" lengthAdjust="spacingAndGlyphs">TABLE OF CONTENT</text><text x="67.1" y="131.90" font-family="Liberation Serif" font-size="15.2" fill="#1e1e1e" stroke="#1e1e1e" stroke-width="0.45" textLength="196.8" lengthAdjust="spacingAndGlyphs">The Power Of Communication</text><text x="67.1" y="150.25" font-family="Liberation Serif" font-size="15.2" fill="#1e1e1e" stroke="#1e1e1e" stroke-width="0.45" textLength="110.7" lengthAdjust="spacingAndGlyphs">Table Of Content</text><text x="67.1" y="168.60" font-family="Liberation Serif" font-size="15.2" fill="#1e1e1e" stroke="#1e1e1e" stroke-width="0.45" textLength="152.3" lengthAdjust="spacingAndGlyphs">Engaging The Audience</text><text x="67.1" y="186.95" font-family="Liberation Serif" font-size="15.2" fill="#1e1e1e" stroke="#1e1e1e" stroke-width="0.45" textLength="186.8" lengthAdjust="spacingAndGlyphs">Effective Delivery Techniques</text><text x="67.1" y="205.30" font-family="Liberation Serif" font-size="15.2" fill="#1e1e1e" stroke="#1e1e1e" stroke-width="0.45" textLength="106.6" lengthAdjust="spacingAndGlyphs">Speaking Impact</text><text x="67.1" y="223.65" font-family="Liberation Serif" font-size="15.2" fill="#1e1e1e" stroke="#1e1e1e" stroke-width="0.45" textLength="115.1" lengthAdjust="spacingAndGlyphs">Dynamic Delivery</text><text x="67.1" y="242.00" font-family="Liberation Serif" font-size="15.2" fill="#1e1e1e" stroke="#1e1e1e" stroke-width="0.45" textLength="149.7" lengthAdjust="spacingAndGlyphs">Final Tips &amp; Takeaways</text><text x="67.1" y="260.35" font-family="Liberation Serif" font-size="15.2" fill="#1e1e1e" stroke="#1e1e1e" stroke-width="0.45" textLength="164.1" lengthAdjust="spacingAndGlyphs">Navigating Q&amp;A Sessions</text><text x="563.0" y="31.2" font-family="Liberation Serif" font-size="7.6" fill="#1f2b8d">2</text></g></g>
<clipPath id="g3"><path d="M23.5 514 V477.3 Q23.5 474.3 26.5 474.3 H87.6 V514 Z"/></clipPath>
<g clip-path="url(#thumb3)">
<rect x="23.5" y="474.3" width="306" height="40" rx="3" fill="#fbf8f4"/>
<path d="M87.6 474.3 H151.8 Q151.4 491 146.4 500 H87.6 Z" fill="#ecf1f5"/>
<g clip-path="url(#g3)"><rect x="23.5" y="474.3" width="64.1" height="40" fill="#d0d590"/>
<g fill="none" stroke="#eef0cc" stroke-width="0.95">
<circle cx="87.6" cy="474.3" r="9.00"/>
<circle cx="87.6" cy="474.3" r="12.55"/>
<circle cx="87.6" cy="474.3" r="16.10"/>
<circle cx="87.6" cy="474.3" r="19.65"/>
<circle cx="87.6" cy="474.3" r="23.20"/>
<circle cx="87.6" cy="474.3" r="26.75"/>
<circle cx="87.6" cy="474.3" r="30.30"/>
<circle cx="87.6" cy="474.3" r="33.85"/>
<circle cx="87.6" cy="474.3" r="37.40"/>
<circle cx="87.6" cy="474.3" r="40.95"/>
<circle cx="87.6" cy="474.3" r="44.50"/>
<circle cx="87.6" cy="474.3" r="48.05"/>
<circle cx="87.6" cy="474.3" r="51.60"/>
<circle cx="87.6" cy="474.3" r="55.15"/>
<circle cx="87.6" cy="474.3" r="58.70"/>
<circle cx="87.6" cy="474.3" r="62.25"/>
<circle cx="87.6" cy="474.3" r="65.80"/>
<circle cx="87.6" cy="474.3" r="69.35"/>
<circle cx="87.6" cy="474.3" r="72.90"/>
<circle cx="87.6" cy="474.3" r="76.45"/>
</g></g>
<rect x="23.5" y="474.3" width="306" height="40" rx="3" fill="none" stroke="#d8dde2" stroke-width="0.6"/>
<text x="306.80" y="493.60" font-family="Liberation Sans" font-size="5.8" font-weight="700" fill="#1f2a8c" textLength="3.2" lengthAdjust="spacingAndGlyphs" >3</text>
</g>
<rect x="1013" y="89" width="11" height="317" rx="4" fill="#f4f4f4"/>
<path d="M1015.8 97 L1018.6 93.5 L1021.4 97 Z" fill="#6e6e6e"/>
<rect x="1015.6" y="137.8" width="5.6" height="36.1" rx="2.8" fill="#757575"/>
<path d="M1015.8 399.8 L1018.6 404 L1021.4 399.8 Z" fill="#6e6e6e"/>
<path d="M1015.8 413.5 L1018.6 409.5 L1021.4 413.5 Z M1015.8 417.3 L1018.6 413.3 L1021.4 417.3 Z" fill="#6e6e6e"/>
<path d="M1015.8 420.5 L1018.6 424.5 L1021.4 420.5 Z M1015.8 424.3 L1018.6 428.3 L1021.4 424.3 Z" fill="#6e6e6e"/>
<rect x="381.6" y="95.3" width="605.8" height="340.8" fill="#d9dde1"/>
<g transform="translate(382.2 95.6)"><rect x="0" y="0" width="605" height="340" fill="#fcf9f5"/><g clip-path="url(#slideclip)" fill="none" stroke="#e9eef4" stroke-width="0.9"><circle cx="2.5" cy="-1.5" r="106.0"/><circle cx="602.5" cy="341.5" r="106.0"/><circle cx="2.5" cy="-1.5" r="99.9"/><circle cx="602.5" cy="341.5" r="99.9"/><circle cx="2.5" cy="-1.5" r="93.8"/><circle cx="602.5" cy="341.5" r="93.8"/><circle cx="2.5" cy="-1.5" r="87.7"/><circle cx="602.5" cy="341.5" r="87.7"/><circle cx="2.5" cy="-1.5" r="81.6"/><circle cx="602.5" cy="341.5" r="81.6"/><circle cx="2.5" cy="-1.5" r="75.5"/><circle cx="602.5" cy="341.5" r="75.5"/><circle cx="2.5" cy="-1.5" r="69.4"/><circle cx="602.5" cy="341.5" r="69.4"/><circle cx="2.5" cy="-1.5" r="63.3"/><circle cx="602.5" cy="341.5" r="63.3"/><circle cx="2.5" cy="-1.5" r="57.2"/><circle cx="602.5" cy="341.5" r="57.2"/><circle cx="2.5" cy="-1.5" r="51.1"/><circle cx="602.5" cy="341.5" r="51.1"/><circle cx="2.5" cy="-1.5" r="45.0"/><circle cx="602.5" cy="341.5" r="45.0"/><circle cx="2.5" cy="-1.5" r="38.9"/><circle cx="602.5" cy="341.5" r="38.9"/><circle cx="2.5" cy="-1.5" r="32.8"/><circle cx="602.5" cy="341.5" r="32.8"/><circle cx="2.5" cy="-1.5" r="26.7"/><circle cx="602.5" cy="341.5" r="26.7"/><circle cx="2.5" cy="-1.5" r="20.6"/><circle cx="602.5" cy="341.5" r="20.6"/><circle cx="2.5" cy="-1.5" r="14.5"/><circle cx="602.5" cy="341.5" r="14.5"/><circle cx="2.5" cy="-1.5" r="8.4"/><circle cx="602.5" cy="341.5" r="8.4"/></g><text x="169" y="54.9" font-family="Liberation Sans" font-size="23.5" font-weight="700" fill="#1f2b8d" stroke="#1f2b8d" stroke-width="0.7" textLength="266" lengthAdjust="spacingAndGlyphs">TABLE OF CONTENT</text><text x="67.1" y="130.70" font-family="Liberation Serif" font-size="15.2" fill="#1e1e1e" stroke="#1e1e1e" stroke-width="0.25" textLength="196.8" lengthAdjust="spacingAndGlyphs">The Power Of Communication</text><text x="67.1" y="148.74" font-family="Liberation Serif" font-size="15.2" fill="#1e1e1e" stroke="#1e1e1e" stroke-width="0.25" textLength="110.7" lengthAdjust="spacingAndGlyphs">Table Of Content</text><text x="67.1" y="166.78" font-family="Liberation Serif" font-size="15.2" fill="#1e1e1e" stroke="#1e1e1e" stroke-width="0.25" textLength="152.3" lengthAdjust="spacingAndGlyphs">Engaging The Audience</text><text x="67.1" y="184.82" font-family="Liberation Serif" font-size="15.2" fill="#1e1e1e" stroke="#1e1e1e" stroke-width="0.25" textLength="186.8" lengthAdjust="spacingAndGlyphs">Effective Delivery Techniques</text><text x="67.1" y="202.86" font-family="Liberation Serif" font-size="15.2" fill="#1e1e1e" stroke="#1e1e1e" stroke-width="0.25" textLength="106.6" lengthAdjust="spacingAndGlyphs">Speaking Impact</text><text x="67.1" y="220.90" font-family="Liberation Serif" font-size="15.2" fill="#1e1e1e" stroke="#1e1e1e" stroke-width="0.25" textLength="115.1" lengthAdjust="spacingAndGlyphs">Dynamic Delivery</text><text x="67.1" y="238.94" font-family="Liberation Serif" font-size="15.2" fill="#1e1e1e" stroke="#1e1e1e" stroke-width="0.25" textLength="149.7" lengthAdjust="spacingAndGlyphs">Final Tips &amp; Takeaways</text><text x="67.1" y="256.98" font-family="Liberation Serif" font-size="15.2" fill="#1e1e1e" stroke="#1e1e1e" stroke-width="0.25" textLength="164.1" lengthAdjust="spacingAndGlyphs">Navigating Q&amp;A Sessions</text><text x="563.0" y="31.2" font-family="Liberation Serif" font-size="7.6" fill="#1f2b8d">2</text></g>
<path d="M569.3 209.6 V193.5" stroke="#8c8c8c" stroke-width="1"/>
<rect x="444.6" y="209.6" width="249.4" height="152" fill="none" stroke="#8c8c8c" stroke-width="0.9"/>
<circle cx="444.6" cy="209.6" r="3.3" fill="#fff" stroke="#666" stroke-width="1.15"/>
<circle cx="569.3" cy="209.6" r="3.3" fill="#fff" stroke="#666" stroke-width="1.15"/>
<circle cx="694" cy="209.6" r="3.3" fill="#fff" stroke="#666" stroke-width="1.15"/>
<circle cx="444.6" cy="285.6" r="3.3" fill="#fff" stroke="#666" stroke-width="1.15"/>
<circle cx="694" cy="285.6" r="3.3" fill="#fff" stroke="#666" stroke-width="1.15"/>
<circle cx="444.6" cy="361.6" r="3.3" fill="#fff" stroke="#666" stroke-width="1.15"/>
<circle cx="569.3" cy="361.6" r="3.3" fill="#fff" stroke="#666" stroke-width="1.15"/>
<circle cx="694" cy="361.6" r="3.3" fill="#fff" stroke="#666" stroke-width="1.15"/>
<path d="M572.9 189.4 A4.4 4.4 0 1 1 573.2 185.2" fill="none" stroke="#6a6a6a" stroke-width="3"/>
<path d="M572.9 189.4 A4.4 4.4 0 1 1 573.2 185.2" fill="none" stroke="#fcf9f5" stroke-width="1.1"/>
<path d="M570.8 185.3 H577.2 L574 189.8 Z" fill="#fcf9f5" stroke="#6a6a6a" stroke-width="0.9" stroke-linejoin="round"/>
<ellipse cx="740" cy="490" rx="240" ry="80" fill="url(#warm)"/>
<rect x="357" y="443" width="667" height="1" fill="#d3d8dc"/>
<text x="363.00" y="458.00" font-family="Liberation Sans" font-size="10" font-weight="400" fill="#606060" textLength="77.0" lengthAdjust="spacingAndGlyphs" >Click to add notes</text>
<rect x="0" y="500" width="1024" height="12" fill="#f3f3f3"/>
<text x="7.80" y="510.50" font-family="Liberation Sans" font-size="8" font-weight="400" fill="#424242" textLength="35.2" lengthAdjust="spacingAndGlyphs" >Slide 2 of 8</text>
<path d="M56.5 503.8 H60 V511 H56.5 Z M60.5 503.8 H64.3 V509 L62.5 511 H60.5 Z" fill="none" stroke="#424242" stroke-width="0.9"/>
<text x="77.30" y="510.50" font-family="Liberation Sans" font-size="8" font-weight="400" fill="#424242" textLength="69.0" lengthAdjust="spacingAndGlyphs" >English (United States)</text>
<circle cx="161.3" cy="503.6" r="1.3" fill="none" stroke="#424242" stroke-width="0.9"/>
<path d="M157.3 505.6 C158.5 506.5 160 506.3 161.3 505.6 C162.6 506.3 164.1 506.5 165.3 505.6 M161.3 506 V511.5 M159.5 507 V511" fill="none" stroke="#424242" stroke-width="0.9"/>
<path d="M162.3 509.5 L163.8 511 L166.8 507.8" fill="none" stroke="#424242" stroke-width="0.9"/>
<text x="169.20" y="510.50" font-family="Liberation Sans" font-size="8" font-weight="400" fill="#424242" textLength="77.2" lengthAdjust="spacingAndGlyphs" >Accessibility: Good to go</text>
<path d="M682.2 507.6 H692.8 M682.2 510.3 H692.8 M685.2 505.6 L687.5 503.2 L689.8 505.6" fill="none" stroke="#4a4a4a" stroke-width="0.9"/>
<text x="693.50" y="510.50" font-family="Liberation Sans" font-size="8" font-weight="400" fill="#424242" textLength="19.6" lengthAdjust="spacingAndGlyphs" >Notes</text>
<path d="M726.5 503.2 H735 V508.3 H730 L727.8 510.8 V508.3 H726.5 Z" fill="none" stroke="#424242" stroke-width="0.8" stroke-linejoin="round"/>
<text x="736.50" y="510.50" font-family="Liberation Sans" font-size="8" font-weight="400" fill="#424242" textLength="33.4" lengthAdjust="spacingAndGlyphs" >Comments</text>
<rect x="783" y="500" width="26.5" height="12" fill="#e0e0e0"/>
<rect x="791" y="503.5" width="10" height="8" fill="none" stroke="#505050" stroke-width="1"/>
<rect x="795.5" y="505" width="4" height="2.8" fill="#505050"/>
<path d="M791.5 509 H797" stroke="#505050" stroke-width="0.8"/>
<rect x="818" y="503.5" width="3.6" height="3.3" fill="none" stroke="#505050" stroke-width="0.8"/>
<rect x="823" y="503.5" width="3.6" height="3.3" fill="none" stroke="#505050" stroke-width="0.8"/>
<rect x="818" y="508.5" width="3.6" height="3.3" fill="none" stroke="#505050" stroke-width="0.8"/>
<rect x="823" y="508.5" width="3.6" height="3.3" fill="none" stroke="#505050" stroke-width="0.8"/>
<path d="M845 503.5 H853.5 V511.5 H845 Z M849.2 503.5 V511.5 M846.3 505.5 H848 M850.5 505.5 H852.2" fill="none" stroke="#505050" stroke-width="0.9"/>
<path d="M872 503 H880 V507.5 H872 Z M876 507.5 V511 M873.5 511.5 H878.5" fill="none" stroke="#505050" stroke-width="0.9"/>
<path d="M893 507.3 H898.4" stroke="#505050" stroke-width="0.9"/>
<rect x="902" y="506.8" width="66.5" height="1.2" fill="#c2c2c2"/>
<rect x="923.8" y="504" width="3.2" height="8" rx="0.6" fill="#555"/>
<rect x="934.9" y="505.2" width="0.8" height="4" fill="#a0a0a0"/>
<path d="M972 507.3 H976.8 M974.4 504.9 V509.7" stroke="#505050" stroke-width="0.9"/>
<circle cx="994" cy="511.6" r="12" fill="#fff" stroke="#cfcfcf" stroke-width="0.8"/>
<circle cx="994" cy="514.5" r="8.5" fill="#f7c51a"/>
<rect x="991.2" y="509" width="1.1" height="2.2" fill="#3a2a00"/><rect x="995.8" y="509" width="1.1" height="2.2" fill="#3a2a00"/>
<path d="M1012.5 506.2 H1021.5 M1017 501.8 V510.8 M1015.2 503.5 L1017 501.6 L1018.8 503.5 M1015.2 509 L1017 510.9 L1018.8 509 M1014.2 504.5 L1012.3 506.2 L1014.2 508 M1019.8 504.5 L1021.7 506.2 L1019.8 508" fill="none" stroke="#505050" stroke-width="0.8"/>
<rect x="1014.7" y="504" width="4.6" height="4.4" fill="none" stroke="#505050" stroke-width="0.8"/>
</svg></body></html>
